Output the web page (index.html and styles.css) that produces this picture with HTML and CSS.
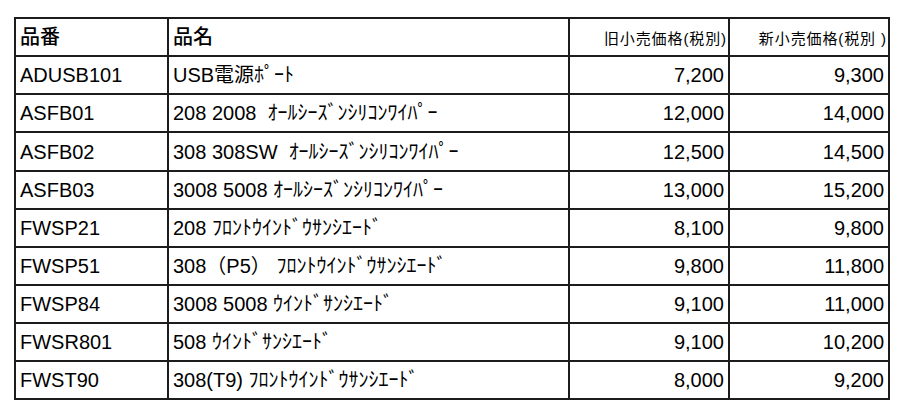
FILE: index.html
```html
<!DOCTYPE html>
<html lang="ja">
<head>
<meta charset="utf-8">
<title>価格表</title>
<link rel="stylesheet" href="styles.css">
</head>
<body>
<div class="sheet">
  <div class="cell head">品番</div>
  <div class="cell head">品名</div>
  <div class="cell head price-head">旧小売価格(税別)</div>
  <div class="cell head price-head">新小売価格(税別 )</div>

  <div class="cell">ADUSB101</div>
  <div class="cell">USB電源ﾎﾟｰﾄ</div>
  <div class="cell num">7,200</div>
  <div class="cell num">9,300</div>

  <div class="cell">ASFB01</div>
  <div class="cell">208 2008  ｵｰﾙｼｰｽﾞﾝｼﾘｺﾝﾜｲﾊﾟｰ</div>
  <div class="cell num">12,000</div>
  <div class="cell num">14,000</div>

  <div class="cell">ASFB02</div>
  <div class="cell">308 308SW  ｵｰﾙｼｰｽﾞﾝｼﾘｺﾝﾜｲﾊﾟｰ</div>
  <div class="cell num">12,500</div>
  <div class="cell num">14,500</div>

  <div class="cell">ASFB03</div>
  <div class="cell">3008 5008 ｵｰﾙｼｰｽﾞﾝｼﾘｺﾝﾜｲﾊﾟｰ</div>
  <div class="cell num">13,000</div>
  <div class="cell num">15,200</div>

  <div class="cell">FWSP21</div>
  <div class="cell">208 ﾌﾛﾝﾄｳｲﾝﾄﾞｳｻﾝｼｴｰﾄﾞ</div>
  <div class="cell num">8,100</div>
  <div class="cell num">9,800</div>

  <div class="cell">FWSP51</div>
  <div class="cell">308（P5） ﾌﾛﾝﾄｳｲﾝﾄﾞｳｻﾝｼｴｰﾄﾞ</div>
  <div class="cell num">9,800</div>
  <div class="cell num">11,800</div>

  <div class="cell">FWSP84</div>
  <div class="cell">3008 5008 ｳｲﾝﾄﾞｻﾝｼｴｰﾄﾞ</div>
  <div class="cell num">9,100</div>
  <div class="cell num">11,000</div>

  <div class="cell">FWSR801</div>
  <div class="cell">508 ｳｲﾝﾄﾞｻﾝｼｴｰﾄﾞ</div>
  <div class="cell num">9,100</div>
  <div class="cell num">10,200</div>

  <div class="cell">FWST90</div>
  <div class="cell">308(T9) ﾌﾛﾝﾄｳｲﾝﾄﾞｳｻﾝｼｴｰﾄﾞ</div>
  <div class="cell num">8,000</div>
  <div class="cell num">9,200</div>
</div>
</body>
</html>
```

FILE: styles.css
```css
html, body {
  margin: 0;
  background: #ffffff;
}

body {
  padding: 17px 0 0 14px;
  font-family: "Liberation Sans", "Noto Sans CJK JP", sans-serif;
  color: #000;
}

.sheet {
  display: grid;
  grid-template-columns: 151px 399px 158px 158px;
  grid-template-rows: 36px 36px 36px 37px repeat(6, 36px);
  gap: 2px;
  padding: 2px;
  width: max-content;
  background: #1c1c1c;
}

.cell {
  background: #ffffff;
  display: flex;
  align-items: center;
  padding: 0 4px;
  font-size: 20px;
  line-height: 1;
  white-space: pre;
  overflow: hidden;
}

.head {
  font-weight: 500;
}

.num {
  justify-content: flex-end;
}

.price-head {
  justify-content: flex-end;
  font-size: 15px;
  font-weight: 400;
  letter-spacing: 0.9px;
  padding: 3px 1px 0 0;
}
```
